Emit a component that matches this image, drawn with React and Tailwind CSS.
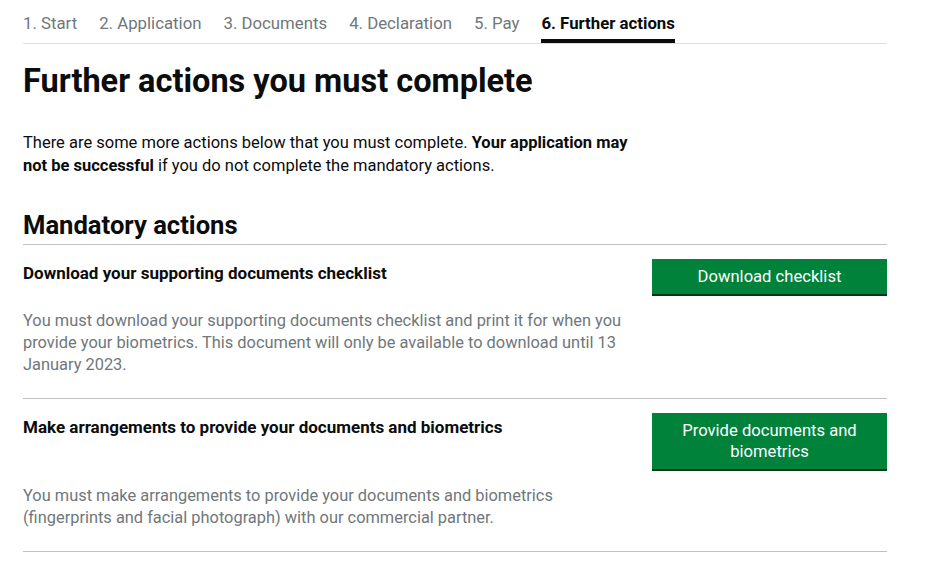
import React from 'react';

const steps = ['1. Start', '2. Application', '3. Documents', '4. Declaration', '5. Pay'];

const actions = [
  {
    title: 'Download your supporting documents checklist',
    button: 'Download checklist',
    text: 'You must download your supporting documents checklist and print it for when you provide your biometrics. This document will only be available to download until 13 January 2023.',
  },
  {
    title: 'Make arrangements to provide your documents and biometrics',
    button: 'Provide documents and biometrics',
    text: 'You must make arrangements to provide your documents and biometrics (fingerprints and facial photograph) with our commercial partner.',
  },
];

const App = () => {
  return (
    <div className="min-h-screen bg-white text-[#0b0c0c] font-['Roboto',sans-serif]">
      <div className="w-[864px] ml-[23px]">
        <nav className="flex items-end gap-[22px] border-b border-[#dedede] pt-[12px]">
          {steps.map((s) => (
            <span key={s} className="text-[16.8px] leading-[23px] pb-[8px] text-[#6f777b]">{s}</span>
          ))}
          <span className="text-[16.8px] leading-[23px] pb-[4px] font-bold border-b-4 border-[#0b0c0c]">6. Further actions</span>
        </nav>

        <h1 className="mt-[17px] text-[32.5px] leading-[40px] font-bold">Further actions you must complete</h1>

        <p className="mt-[30px] w-[612px] text-[16.5px] leading-[23px]">
          There are some more actions below that you must complete. <strong>Your application may not be successful</strong> if you do not complete the mandatory actions.
        </p>

        <h2 className="mt-[31px] pb-[2px] text-[25.6px] leading-[34px] font-bold border-b border-[#bfc1c3]">Mandatory actions</h2>

        {actions.map((a) => (
          <div key={a.title} className="pt-[14px] pb-[22px] border-b border-[#bfc1c3]">
            <div className="flex gap-[24px]">
              <h3 className="w-[605px] mt-[3px] text-[17px] leading-[22px] font-bold">{a.title}</h3>
              <div className="flex-1 pb-[2px]">
                <button className="w-full px-[24px] py-[7px] bg-[#00823b] text-white text-[16.6px] leading-[21px] shadow-[0_2px_0_#003618]">
                  {a.button}
                </button>
              </div>
            </div>
            <p className="mt-[14px] w-[610px] text-[16.4px] leading-[22px] text-[#6f777b]">{a.text}</p>
          </div>
        ))}
      </div>
    </div>
  );
};

export default App;
